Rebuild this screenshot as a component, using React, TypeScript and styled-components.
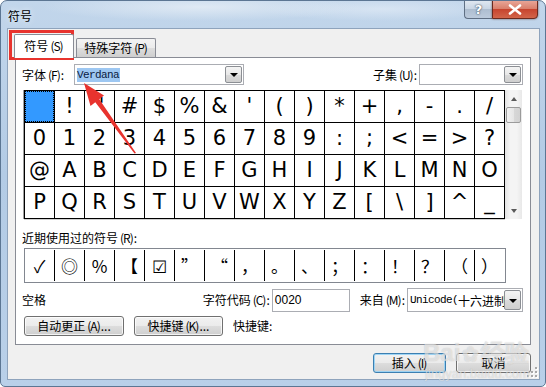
import React from "react";
import styled, { createGlobalStyle } from "styled-components";

const GlobalStyle = createGlobalStyle`
  html, body {
    margin: 0;
    padding: 0;
  }
  body {
    width: 546px;
    height: 387px;
    overflow: hidden;
    background: #ffffff;
    font-family: "Noto Sans CJK SC", "Noto Sans", sans-serif;
    font-size: 12px;
    color: #000;
  }
`;

const CJK = `"Noto Sans CJK SC", "Noto Sans", sans-serif`;

const gridRows: string[][] = [
  [" ", "!", '"', "#", "$", "%", "&", "'", "(", ")", "*", "+", ",", "-", ".", "/"],
  "0123456789:;<=>?".split(""),
  "@ABCDEFGHIJKLMNO".split(""),
  "PQRSTUVWXYZ[\\]^_".split(""),
];

const recent = ["✓", "◎", "%", "【", "☑", "”", "“", "，", "。", "、", "；", "：", "！", "？", "（", "）"];

export default function App() {
  return (
    <>
      <GlobalStyle />
      <Window>
        <TitleBar>
          <Title>符号</Title>
          <Caption>
            <HelpBtn>?</HelpBtn>
            <CloseBtn>
              <svg width="14" height="11" viewBox="0 0 14 11">
                <path
                  d="M2 1.5 L12 9.5 M12 1.5 L2 9.5"
                  stroke="#fff"
                  strokeWidth="2.6"
                  strokeLinecap="round"
                />
              </svg>
            </CloseBtn>
          </Caption>
        </TitleBar>

        <Client>
          <TabStrip>
            <Tab $active>
              符号<Key>(S)</Key>
            </Tab>
            <Tab>
              特殊字符<Key>(P)</Key>
            </Tab>
          </TabStrip>

          <Panel>
            <FontRow>
              <Label $w={52}>
                字体<Key>(F)</Key>:
              </Label>
              <Combo $w={170}>
                <ComboText>
                  <Selected>Verdana</Selected>
                </ComboText>
                <DropBtn />
              </Combo>
              <Spacer />
              <Label>
                子集<Key>(U)</Key>:
              </Label>
              <Combo $w={104} style={{ marginLeft: 2 }}>
                <ComboText />
                <DropBtn />
              </Combo>
            </FontRow>

            <CharArea>
              <CharGrid>
                {gridRows.flat().map((c, i) => (
                  <Cell key={i} $selected={i === 0}>
                    {c}
                  </Cell>
                ))}
              </CharGrid>
              <ScrollBar>
                <ScrollArrow $up />
                <Thumb />
                <Track />
                <ScrollArrow />
              </ScrollBar>
            </CharArea>

            <SectionLabel>
              近期使用过的符号<Key>(R)</Key>:
            </SectionLabel>
            <RecentBox>
              {recent.map((c, i) => (
                <RecentCell key={i}>{c}</RecentCell>
              ))}
            </RecentBox>

            <InfoRow>
              <Label style={{ flex: 1 }}>空格</Label>
              <Label>
                字符代码<Key>(C)</Key>:
              </Label>
              <TextInput>0020</TextInput>
              <Label style={{ marginLeft: 10 }}>
                来自<Key>(M)</Key>:
              </Label>
              <Combo $w={116} $h={24} style={{ marginLeft: 2 }}>
                <ComboText $mono>
                  Unicode(<span style={{ fontFamily: CJK, letterSpacing: 0, fontSize: 12 }}>十六进制)</span>
                </ComboText>
                <DropBtn />
              </Combo>
            </InfoRow>

            <ButtonRow>
              <Button $w={100}>
                自动更正<Key>(A)</Key>...
              </Button>
              <Button $w={89}>
                快捷键<Key>(K)</Key>...
              </Button>
              <Label>快捷键:</Label>
            </ButtonRow>
          </Panel>

          <Footer>
            <Button $w={73} $default>
              插入<Key>(I)</Key>
            </Button>
            <Button $w={75}>取消</Button>
          </Footer>

          <Grip width="12" height="12" viewBox="0 0 12 12">
            {[
              [10, 2],
              [10, 6],
              [6, 6],
              [10, 10],
              [6, 10],
              [2, 10],
            ].map(([x, y], i) => (
              <g key={i}>
                <rect x={x} y={y} width="2" height="2" fill="#fff" />
                <rect x={x - 1} y={y - 1} width="2" height="2" fill="#a8a8a8" />
              </g>
            ))}
          </Grip>

          <Watermark>
            <WmBig>
              Bai<WmPaw>✿</WmPaw>经验
            </WmBig>
            <WmSmall>jingyan.baidu.com</WmSmall>
          </Watermark>
        </Client>

        <RedBox />
        <Arrow width="546" height="387" viewBox="0 0 546 387">
          <polygon
            points="84,83 104,95.5 99.3,99.3 136,153 134.5,153.5 95.3,102.3 90.5,106"
            fill="#e8332e"
          />
        </Arrow>
      </Window>
    </>
  );
}

const Window = styled.div`
  position: relative;
  box-sizing: border-box;
  width: 546px;
  height: 387px;
  display: flex;
  flex-direction: column;
  padding: 0 5px 6px 6px;
  border: 1px solid #5c7693;
  border-radius: 7px 7px 5px 5px;
  background:
    radial-gradient(ellipse 160px 14px at 200px 6px, rgba(230, 238, 246, 0.8), transparent),
    radial-gradient(ellipse 120px 12px at 380px 8px, rgba(225, 235, 246, 0.7), transparent),
    linear-gradient(180deg, #c2d6eb 0%, #b3cbe5 45%, #b9d0e9 100%);
  overflow: hidden;
`;

const TitleBar = styled.div`
  height: 27px;
  display: flex;
  align-items: flex-start;
  justify-content: space-between;
`;

const Title = styled.div`
  margin: 7px 0 0 1px;
  font-size: 12px;
  line-height: 16px;
  color: #000;
  text-shadow: 0 0 6px rgba(255, 255, 255, 0.9);
`;

const Caption = styled.div`
  display: flex;
  margin: -1px 2px 0 0;
`;

const HelpBtn = styled.div`
  box-sizing: border-box;
  width: 28px;
  height: 19px;
  border: 1px solid #5f6f83;
  border-right: none;
  border-radius: 0 0 0 4px;
  background: linear-gradient(180deg, #dfe7f0 0%, #c9d6e4 45%, #aebed0 50%, #bccbdc 100%);
  color: #fff;
  font: bold 13px "DejaVu Sans", sans-serif;
  text-shadow: 0 0 2px #3f4f60, 0 0 1px #3f4f60;
  text-align: center;
  line-height: 17px;
`;

const CloseBtn = styled.div`
  box-sizing: border-box;
  width: 46px;
  height: 19px;
  border: 1px solid #6b2a1f;
  border-radius: 0 0 4px 0;
  background: linear-gradient(180deg, #e8a596 0%, #d9806c 45%, #c7452f 50%, #d2654a 100%);
  display: flex;
  align-items: center;
  justify-content: center;
  filter: drop-shadow(0 0 1px rgba(60, 20, 10, 0.6));
`;

const Client = styled.div`
  position: relative;
  flex: 1;
  box-sizing: border-box;
  display: flex;
  flex-direction: column;
  padding: 5px 8px 0 7px;
  border: 1px solid #8ea3bc;
  background: #f0f0f0;
`;

const TabStrip = styled.div`
  position: relative;
  z-index: 1;
  display: flex;
  align-items: flex-end;
  height: 24px;
  margin-bottom: -1px;
`;

const Tab = styled.div<{ $active?: boolean }>`
  box-sizing: border-box;
  height: ${({ $active }) => ($active ? "24px" : "19px")};
  width: ${({ $active }) => ($active ? "60px" : "80px")};
  margin: ${({ $active }) => ($active ? "0 0 0 -1px" : "0 0 1px 2px")};
  border: 1px solid #898c95;
  border-bottom: none;
  border-radius: 2px 2px 0 0;
  background: ${({ $active }) =>
    $active
      ? "#ffffff"
      : "linear-gradient(180deg, #f3f3f3 0%, #ebebeb 50%, #dddddd 51%, #cfcfcf 100%)"};
  font-size: 12px;
  line-height: ${({ $active }) => ($active ? "22px" : "18px")};
  text-align: center;
  white-space: nowrap;
`;

const Key = styled.span`
  letter-spacing: -1px;
  margin: 0 1px 0 2px;
`;

const Panel = styled.div`
  box-sizing: border-box;
  height: 288px;
  display: flex;
  flex-direction: column;
  padding: 6px 7px 0 6px;
  border: 1px solid #898c95;
  background: #ffffff;
`;

const FontRow = styled.div`
  display: flex;
  align-items: center;
  height: 21px;
`;

const Label = styled.div<{ $w?: number }>`
  ${({ $w }) => ($w ? `width: ${$w}px;` : "")}
  font-size: 12px;
  line-height: 14px;
  white-space: nowrap;
`;

const Spacer = styled.div`
  flex: 1;
`;

const Combo = styled.div<{ $w: number; $h?: number }>`
  box-sizing: border-box;
  width: ${({ $w }) => $w}px;
  height: ${({ $h }) => $h ?? 21}px;
  display: flex;
  padding: 1px;
  border: 1px solid #abadb3;
  background: #fff;
`;

const ComboText = styled.div<{ $mono?: boolean }>`
  flex: 1;
  overflow: hidden;
  display: flex;
  align-items: center;
  padding-left: 1px;
  white-space: nowrap;
  font-family: "Liberation Mono", monospace;
  font-size: 11px;
  letter-spacing: -0.6px;
`;

const Selected = styled.span`
  background: #9dc7f2;
  color: #0a1a40;
  padding: 1px 1px 1px 0;
`;

const DropBtn = styled.div`
  box-sizing: border-box;
  width: 17px;
  border: 1px solid #8c8f94;
  border-radius: 2px;
  background: linear-gradient(180deg, #f4f4f4 0%, #e8e8e8 50%, #dadada 51%, #cfcfcf 100%);
  display: flex;
  align-items: center;
  justify-content: center;

  &::after {
    content: "";
    border-left: 4px solid transparent;
    border-right: 4px solid transparent;
    border-top: 4px solid #000;
    margin-top: 1px;
  }
`;

const CharArea = styled.div`
  display: flex;
  margin: 5px 0 0 2px;
`;

const CharGrid = styled.div`
  display: grid;
  grid-template-columns: repeat(16, 29px);
  grid-template-rows: repeat(4, 31px);
  gap: 1px;
  padding: 1px;
  background: #000;
  box-shadow: -1px 0 0 #a0a0a0, 0 1px 0 #d0d0d0;
`;

const Cell = styled.div<{ $selected?: boolean }>`
  display: flex;
  align-items: center;
  justify-content: center;
  background: ${({ $selected }) => ($selected ? "#3399ff" : "#fff")};
  outline: ${({ $selected }) => ($selected ? "1px dotted #000" : "none")};
  outline-offset: -1px;
  font-family: "DejaVu Sans", Verdana, sans-serif;
  font-size: 21px;
  line-height: 1;
  color: #000;
`;

const ScrollBar = styled.div`
  width: 17px;
  height: 129px;
  display: flex;
  flex-direction: column;
  background: linear-gradient(90deg, #e3e3e3 0%, #f4f4f4 30%, #f4f4f4 70%, #e8e8e8 100%);
`;

const ScrollArrow = styled.div<{ $up?: boolean }>`
  height: 17px;
  display: flex;
  align-items: center;
  justify-content: center;

  &::after {
    content: "";
    border-left: 3.5px solid transparent;
    border-right: 3.5px solid transparent;
    ${({ $up }) =>
      $up ? "border-bottom: 4px solid #5a5a5a;" : "border-top: 4px solid #5a5a5a;"}
  }
`;

const Thumb = styled.div`
  box-sizing: border-box;
  height: 16px;
  margin: 0 1px;
  border: 1px solid #9b9b9b;
  border-radius: 2px;
  background: linear-gradient(90deg, #f1f1f1 0%, #e6e6e6 50%, #d8d8d8 51%, #d2d2d2 100%);
`;

const Track = styled.div`
  flex: 1;
`;

const SectionLabel = styled.div`
  margin-top: 12px;
  font-size: 12px;
  line-height: 14px;
`;

const RecentBox = styled.div`
  box-sizing: border-box;
  display: flex;
  width: 482px;
  height: 35px;
  margin: 3px 0 0 2px;
  padding: 1px 0;
  border: 1px solid #828790;
  background: #fff;
`;

const RecentCell = styled.div`
  box-sizing: border-box;
  width: 30px;
  display: flex;
  align-items: center;
  justify-content: center;
  border-left: 1px solid #000;
  font-family: ${CJK};
  font-size: 17px;
  line-height: 1;

  &:first-child {
    width: 29px;
    border-left: none;
  }
`;

const InfoRow = styled.div`
  display: flex;
  align-items: center;
  height: 24px;
  margin-top: 5px;
`;

const TextInput = styled.div`
  box-sizing: border-box;
  width: 78px;
  height: 23px;
  margin-left: 2px;
  padding: 0 2px;
  border: 1px solid #abadb3;
  background: #fff;
  font-family: "Liberation Sans", Arial, sans-serif;
  font-size: 12px;
  line-height: 21px;
`;

const ButtonRow = styled.div`
  display: flex;
  align-items: center;
  gap: 10px;
  margin: 4px 0 0 2px;
`;

const Button = styled.div<{ $w: number; $default?: boolean }>`
  box-sizing: border-box;
  width: ${({ $w }) => $w}px;
  height: 20px;
  border: 1px solid ${({ $default }) => ($default ? "#3c7fb1" : "#707070")};
  border-radius: 3px;
  background: linear-gradient(180deg, #f2f2f2 0%, #ebebeb 50%, #dddddd 51%, #cfcfcf 100%);
  box-shadow: inset 0 0 0 1px
    ${({ $default }) => ($default ? "rgba(150, 210, 245, 0.9)" : "rgba(255, 255, 255, 0.75)")};
  font-size: 12px;
  line-height: 18px;
  text-align: center;
  white-space: nowrap;
`;

const Footer = styled.div`
  display: flex;
  justify-content: flex-end;
  gap: 10px;
  margin-top: 8px;
`;

const Grip = styled.svg`
  position: absolute;
  right: 1px;
  bottom: 1px;
`;

const Watermark = styled.div`
  position: absolute;
  left: 415px;
  top: 311px;
  color: rgba(255, 255, 255, 0.55);
  text-shadow: 0 0 1px rgba(90, 90, 90, 0.35);
  pointer-events: none;
`;

const WmBig = styled.div`
  font-family: "Liberation Sans", Arial, sans-serif;
  font-size: 24px;
  line-height: 26px;
  font-weight: bold;
  white-space: nowrap;
`;

const WmPaw = styled.span`
  font-size: 20px;
  margin: 0 2px;
`;

const WmSmall = styled.div`
  font-family: "Liberation Sans", Arial, sans-serif;
  font-size: 13px;
  line-height: 14px;
  margin-left: 2px;
`;

const RedBox = styled.div`
  position: absolute;
  left: 8px;
  top: 29px;
  box-sizing: border-box;
  width: 65px;
  height: 30px;
  border: 3px solid #e8332e;
  pointer-events: none;
`;

const Arrow = styled.svg`
  position: absolute;
  left: -1px;
  top: -1px;
  pointer-events: none;
`;
